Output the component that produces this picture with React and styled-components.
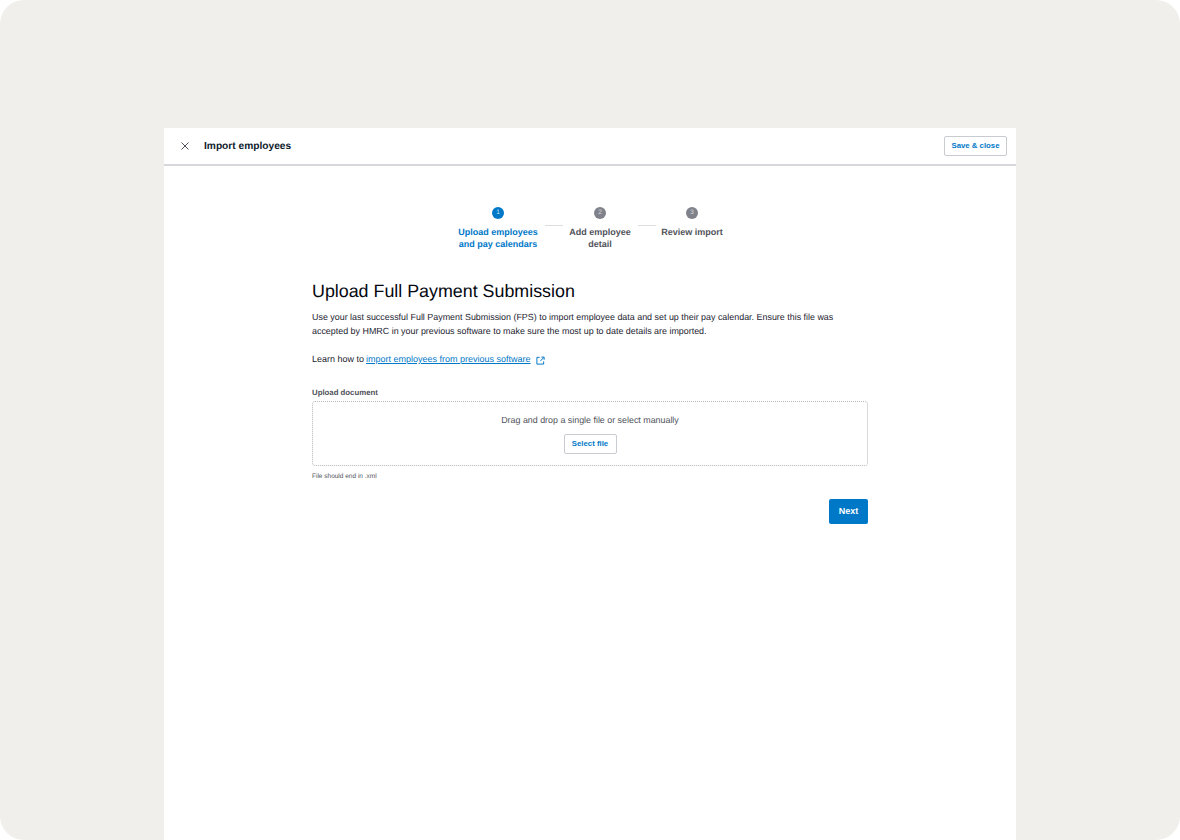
import { createGlobalStyle } from "styled-components";
import styled from "styled-components";

const GlobalStyle = createGlobalStyle`
  html, body {
    margin: 0;
    padding: 0;
    background: #ffffff;
  }
  body {
    font-family: "Liberation Sans", Arial, sans-serif;
    -webkit-font-smoothing: antialiased;
    text-rendering: geometricPrecision;
  }
`;

const Frame = styled.div`
  box-sizing: border-box;
  width: 1180px;
  height: 840px;
  background: #f0efeb;
  border-radius: 24px;
  padding-top: 128px;
  overflow: hidden;
`;

const Dialog = styled.section`
  width: 852px;
  height: 712px;
  margin: 0 auto;
  background: #ffffff;
`;

const Header = styled.header`
  box-sizing: border-box;
  height: 38px;
  display: flex;
  align-items: center;
  padding: 0 9px 0 16px;
  border-bottom: 2px solid #d5d7da;
`;

const CloseButton = styled.button`
  width: 10px;
  height: 10px;
  padding: 0;
  border: 0;
  background: none;
  display: flex;
  color: #4f525a;
  svg {
    width: 10px;
    height: 10px;
  }
`;

const Title = styled.h1`
  margin: 2px 0 0 14px;
  flex: 1;
  font-size: 10.2px;
  line-height: 14px;
  font-weight: 700;
  color: #0e1a2c;
`;

const OutlineButton = styled.button`
  box-sizing: border-box;
  width: ${(props) => props.$width}px;
  height: 20px;
  padding: 0 0 2px;
  border: 1px solid #c8cbcf;
  border-radius: 2px;
  background: #ffffff;
  color: #0078c8;
  font-family: inherit;
  font-size: 7.8px;
  font-weight: 700;
`;

const Body = styled.div`
  width: 556px;
  margin: 0 auto;
`;

const Stepper = styled.ol`
  list-style: none;
  margin: 0;
  padding: 41px 0 0;
  display: flex;
  justify-content: center;
`;

const Step = styled.li`
  width: ${(props) => props.$width}px;
  display: flex;
  flex-direction: column;
  align-items: center;
  color: ${(props) => (props.$active ? "#0078c8" : "#4f525a")};
  font-size: 9px;
  font-weight: 700;
  line-height: 12px;
  text-align: center;
`;

const StepDot = styled.span`
  width: 12px;
  height: 12px;
  border-radius: 50%;
  margin-bottom: 7px;
  background: ${(props) => (props.$active ? "#0078c8" : "#7f828a")};
  color: ${(props) => (props.$active ? "#cde6f6" : "#d8d9dc")};
  font-size: 6.5px;
  font-weight: 400;
  line-height: 12px;
`;

const StepLine = styled.span`
  width: 18px;
  height: 1px;
  margin-top: 18px;
  background: #dcdee0;
`;

const Heading = styled.h2`
  margin: 29px 0 0;
  font-size: 17.85px;
  line-height: 24px;
  font-weight: 400;
  color: #05080f;
`;

const Paragraph = styled.p`
  margin: 7px 0 0;
  font-size: 8.92px;
  line-height: 14px;
  color: #1c2330;
`;

const LearnRow = styled.p`
  margin: 14px 0 0;
  display: flex;
  align-items: center;
  font-size: 9px;
  line-height: 14px;
  color: #1c2330;
`;

const Link = styled.a`
  margin-left: 2px;
  color: #0078c8;
  text-decoration: underline;
  text-underline-offset: 1px;
`;

const ExternalIcon = styled.svg`
  width: 9px;
  height: 9px;
  margin: 2px 0 0 5px;
  color: #0078c8;
`;

const FieldLabel = styled.label`
  display: block;
  margin-top: 21px;
  font-size: 7.8px;
  line-height: 12px;
  font-weight: 700;
  color: #4f525a;
`;

const DropZone = styled.div`
  box-sizing: border-box;
  height: 65px;
  margin-top: 2px;
  border: 1px dotted #b4b6ba;
  border-radius: 3px;
  display: flex;
  flex-direction: column;
  align-items: center;
  padding-top: 12px;
  gap: 8px;
`;

const DropText = styled.span`
  font-size: 8.9px;
  line-height: 12px;
  color: #4f525a;
`;

const Hint = styled.p`
  margin: 6px 0 0;
  font-size: 6.5px;
  line-height: 10px;
  color: #4f525a;
`;

const Actions = styled.div`
  display: flex;
  justify-content: flex-end;
  margin-top: 17px;
`;

const PrimaryButton = styled.button`
  width: 39px;
  height: 25px;
  padding: 0 0 2px;
  border: 0;
  border-radius: 2px;
  background: #0078c8;
  color: #ffffff;
  font-family: inherit;
  font-size: 9px;
  font-weight: 700;
`;

const App = () => {
  return (
    <Frame>
      <GlobalStyle />
      <Dialog>
        <Header>
          <CloseButton aria-label="Close">
            <svg viewBox="0 0 10 10" fill="none" stroke="currentColor" strokeWidth="1">
              <path d="M1.5 1.5l7 7M8.5 1.5l-7 7" />
            </svg>
          </CloseButton>
          <Title>Import employees</Title>
          <OutlineButton $width={63}>Save &amp; close</OutlineButton>
        </Header>
        <Body>
          <Stepper>
            <Step $active $width={93}>
              <StepDot $active>1</StepDot>
              Upload employees
              <br />
              and pay calendars
            </Step>
            <StepLine />
            <Step $width={75}>
              <StepDot>2</StepDot>
              Add employee
              <br />
              detail
            </Step>
            <StepLine />
            <Step $width={73}>
              <StepDot>3</StepDot>
              Review import
            </Step>
          </Stepper>
          <Heading>Upload Full Payment Submission</Heading>
          <Paragraph>
            Use your last successful Full Payment Submission (FPS) to import employee data and set up their pay calendar. Ensure this file was
            <br />
            accepted by HMRC in your previous software to make sure the most up to date details are imported.
          </Paragraph>
          <LearnRow>
            Learn how to <Link>import employees from previous software</Link>
            <ExternalIcon viewBox="0 0 10 10" fill="none" stroke="currentColor" strokeWidth="1.1">
              <path d="M4 1.5H1v7.5h7.5V6M5 5.5L8.6 1.6M6 1.2h3v3" />
            </ExternalIcon>
          </LearnRow>
          <FieldLabel>Upload document</FieldLabel>
          <DropZone>
            <DropText>Drag and drop a single file or select manually</DropText>
            <OutlineButton $width={53}>Select file</OutlineButton>
          </DropZone>
          <Hint>File should end in .xml</Hint>
          <Actions>
            <PrimaryButton>Next</PrimaryButton>
          </Actions>
        </Body>
      </Dialog>
    </Frame>
  );
};

export default App;
